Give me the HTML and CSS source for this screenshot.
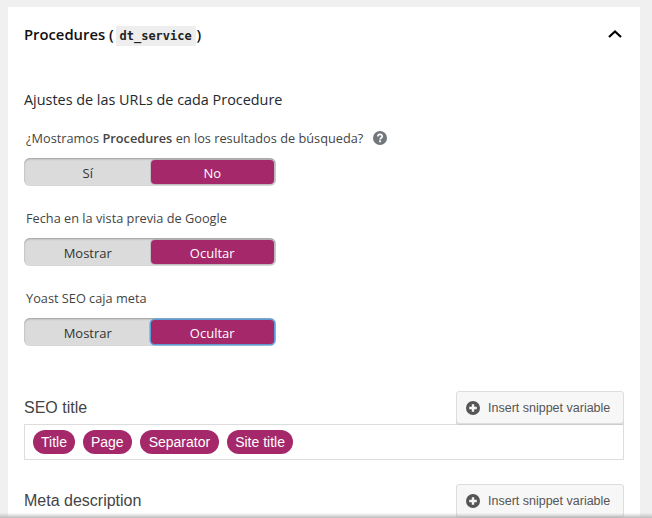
FILE: index.html
```html
<!DOCTYPE html>
<html lang="es">
<head>
    <meta charset="UTF-8">
    <title>Procedures</title>
    <link rel="stylesheet" href="styles.css">
</head>
<body>
    <div class="panel">
        <div class="panel-head">
            <h2 class="panel-title">Procedures ( <code>dt_service</code> )</h2>
            <svg class="chevron" width="16" height="10" viewBox="0 0 16 10"><path d="M2 8 L8 2.5 L14 8" fill="none" stroke="#000" stroke-width="2.2"/></svg>
        </div>
        <div class="panel-body">
            <h3 class="sub-title">Ajustes de las URLs de cada Procedure</h3>

            <div class="field-label">
                <span>¿Mostramos <strong>Procedures</strong> en los resultados de búsqueda?</span>
                <svg class="help" width="14" height="14" viewBox="0 0 15 15"><circle cx="7.5" cy="7.5" r="7.5" fill="#72777c"/><path d="M5.2 5.9 C5.2 3 9.9 3 9.9 5.7 C9.9 7.5 7.6 7.4 7.6 9" fill="none" stroke="#fff" stroke-width="1.8"/><rect x="6.6" y="10" width="2" height="2" fill="#fff"/></svg>
            </div>
            <div class="toggle">
                <span class="opt">Sí</span>
                <span class="opt on">No</span>
            </div>

            <div class="field-label">Fecha en la vista previa de Google</div>
            <div class="toggle">
                <span class="opt">Mostrar</span>
                <span class="opt on">Ocultar</span>
            </div>

            <div class="field-label">Yoast SEO caja meta</div>
            <div class="toggle">
                <span class="opt">Mostrar</span>
                <span class="opt on focus">Ocultar</span>
            </div>

            <div class="snippet-row first">
                <span class="snippet-label">SEO title</span>
                <button class="btn-snippet">
                    <svg width="14" height="14" viewBox="0 0 14 14"><circle cx="7" cy="7" r="7" fill="#555"/><path d="M7 3.2 V10.8 M3.2 7 H10.8" stroke="#f5f5f5" stroke-width="2.4"/></svg>
                    Insert snippet variable
                </button>
            </div>
            <div class="snippet-input">
                <span class="pill">Title</span>
                <span class="pill">Page</span>
                <span class="pill wide">Separator</span>
                <span class="pill">Site title</span>
            </div>

            <div class="snippet-row second">
                <span class="snippet-label">Meta description</span>
                <button class="btn-snippet">
                    <svg width="14" height="14" viewBox="0 0 14 14"><circle cx="7" cy="7" r="7" fill="#555"/><path d="M7 3.2 V10.8 M3.2 7 H10.8" stroke="#f5f5f5" stroke-width="2.4"/></svg>
                    Insert snippet variable
                </button>
            </div>
        </div>
    </div>
    <div class="bottom-edge"></div>
</body>
</html>
```

FILE: styles.css
```css
html, body {
    height: 518px;
    overflow: hidden;
}
body {
    margin: 0;
    padding: 7px 12px 0 8px;
    box-sizing: border-box;
    background: #f0f0f0;
    font-family: "Open Sans", "Noto Sans", sans-serif;
    color: #32373c;
}
.panel {
    background: #fff;
    height: 511px;
    overflow: hidden;
    box-shadow: 0 1px 1px rgba(0,0,0,.04);
    padding: 0 16px;
}
.panel-head {
    display: flex;
    align-items: center;
    justify-content: space-between;
    height: 54px;
}
.panel-title {
    margin: 0;
    font-size: 14.8px;
    font-weight: 600;
    color: #111;
}
.panel-title code {
    font-family: "DejaVu Sans Mono", monospace;
    font-size: 12px;
    font-weight: 700;
    background: #eee;
    margin: 0 -3px 0 -2px;
    padding: 3px 4px;
    color: #222;
}
.chevron {
    margin-right: 1px;
}
.panel-body {
    padding-top: 29px;
}
.sub-title {
    margin: 0 0 18px;
    font-size: 14.4px;
    font-weight: 500;
    line-height: 20px;
    color: #23282d;
}
.field-label {
    display: flex;
    align-items: center;
    height: 20px;
    margin: 0 0 10px 2px;
    font-size: 12.75px;
    color: #444;
}
.field-label strong {
    font-weight: 600;
}
.help {
    margin-left: 10px;
}
.toggle {
    display: flex;
    width: 252px;
    height: 28px;
    box-sizing: border-box;
    padding: 2px;
    background: #dbdbdb;
    border-radius: 6px;
    box-shadow: inset 0 1px 2px rgba(0,0,0,.3);
    margin-bottom: 22px;
}
.opt {
    flex: 1;
    text-align: center;
    font-size: 13px;
    line-height: 26px;
    color: #333;
}
.opt.on {
    margin-left: 1px;
    background: #a4286a;
    color: #fff;
    border-radius: 4px;
    box-shadow: 0 0 0 1px rgba(120,90,110,.25);
}
.opt.focus {
    box-shadow: 0 0 0 1.5px #5b9dd9;
}
.snippet-row {
    display: flex;
    align-items: center;
    justify-content: space-between;
    height: 33px;
}
.snippet-row.first {
    margin-top: 45px;
}
.snippet-row.second {
    margin-top: 24px;
}
.snippet-label {
    font-family: "Liberation Sans", Arial, sans-serif;
    font-size: 16px;
    color: #444;
}
.btn-snippet {
    display: flex;
    align-items: center;
    gap: 8px;
    width: 168px;
    height: 33px;
    box-sizing: border-box;
    padding: 0 8px 0 9px;
    background: #f7f7f7;
    border: 1px solid #ddd;
    border-radius: 3px;
    box-shadow: 0 1px 0 #ccc;
    font-family: "Liberation Sans", Arial, sans-serif;
    font-size: 12.5px;
    color: #555;
    white-space: nowrap;
}
.snippet-input {
    display: flex;
    gap: 8px;
    align-items: center;
    height: 36px;
    box-sizing: border-box;
    padding: 0 8px;
    border: 1px solid #ddd;
    font-family: "Liberation Sans", Arial, sans-serif;
}
.pill {
    height: 24px;
    line-height: 24px;
    padding: 0 8px;
    border-radius: 12px;
    background: #a4286a;
    color: #fff;
    font-size: 14px;
}
.pill.wide {
    padding: 0 9px;
}
.bottom-edge {
    position: fixed;
    left: 0;
    right: 0;
    bottom: 0;
    height: 5px;
    background: linear-gradient(rgba(190,190,190,0), #bbb);
}
```
